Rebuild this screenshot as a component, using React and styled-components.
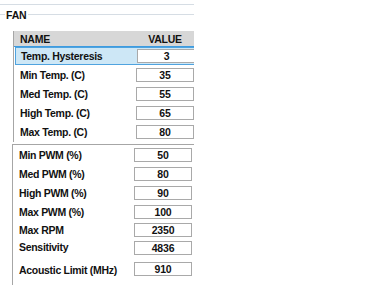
import React from 'react';
import styled, { createGlobalStyle } from 'styled-components';

const GlobalStyle = createGlobalStyle`
	html, body {
		margin: 0;
		padding: 0;
		background: #fff;
	}
	body {
		font-family: 'Liberation Sans', Arial, sans-serif;
		color: #111;
	}
`;

const Panel = styled.div`
	width: 194px;
	height: 301px;
	overflow: hidden;
	padding-top: 4px;
	box-sizing: border-box;
`;

const Rule = styled.div`
	height: 1px;
	background: #d6dde4;
`;

const Group = styled.div`
	display: flex;
	align-items: center;
	height: 11px;
	margin-top: 4px;

	&::before,
	&::after {
		content: '';
		height: 1px;
		background: #d6dde4;
	}

	&::before {
		width: 5px;
	}

	&::after {
		flex: 1;
	}

	span {
		font-size: 10.5px;
		font-weight: 700;
		padding: 0 2px 0 1px;
		letter-spacing: -0.2px;
	}
`;

const Table = styled.div`
	margin-left: ${(p) => p.$left}px;
	margin-top: ${(p) => p.$top}px;
	padding-bottom: ${(p) => p.$bottom || 0}px;
	border-left: 1px solid #a6a6a6;
	border-top: ${(p) => (p.$ruled ? '1px solid #a6a6a6' : 'none')};
	width: 220px;
`;

const Header = styled.div`
	display: grid;
	grid-template-columns: 122px 58px;
	align-items: center;
	height: 15px;
	background: #d7d7d7;
	border-bottom: 1px solid #3d9be0;
	font-size: 10.5px;
	font-weight: 700;
	letter-spacing: -0.25px;

	span:first-child {
		padding-left: 6px;
	}

	span:last-child {
		text-align: center;
	}
`;

const Row = styled.div`
	display: grid;
	grid-template-columns: ${(p) => (p.$wide ? 121 : 122)}px 58px;
	align-items: center;
	height: ${(p) => p.$h || 19}px;
	box-sizing: border-box;
	background: ${(p) => (p.$selected ? '#cde7f6' : 'transparent')};
	border: ${(p) => (p.$selected ? '1px solid #4fa3df' : 'none')};
	border-right: none;
	margin-left: ${(p) => (p.$selected ? '1px' : '0')};
`;

const Label = styled.span`
	font-size: 10.5px;
	font-weight: 700;
	letter-spacing: -0.3px;
	padding-left: ${(p) => (p.$selected ? 5 : 6)}px;
	position: relative;
	top: ${(p) => p.$shift || 0}px;
	white-space: nowrap;
`;

const Box = styled.div`
	height: 14px;
	box-sizing: border-box;
	border: 1px solid #a9a9a9;
	background: #fff;
	font-size: 10.5px;
	font-weight: 700;
	letter-spacing: -0.2px;
	text-align: center;
	line-height: 12px;
	margin-left: ${(p) => (p.$selected ? '-1px' : '0')};
`;

const temps = [
	{ name: 'Temp. Hysteresis', value: '3', selected: true, h: 18 },
	{ name: 'Min Temp. (C)', value: '35' },
	{ name: 'Med Temp. (C)', value: '55' },
	{ name: 'High Temp. (C)', value: '65' },
	{ name: 'Max Temp. (C)', value: '80', h: 20 },
];

const pwm = [
	{ name: 'Min PWM (%)', value: '50' },
	{ name: 'Med PWM (%)', value: '80' },
	{ name: 'High PWM (%)', value: '90' },
	{ name: 'Max PWM (%)', value: '100' },
	{ name: 'Max RPM', value: '2350', h: 17 },
	{ name: 'Sensitivity', value: '4836', h: 19, shift: -1 },
	{ name: 'Acoustic Limit (MHz)', value: '910', h: 23, shift: 1 },
];

const App = () => (
	<>
		<GlobalStyle />
		<Panel>
			<Rule />
			<Group>
				<span>FAN</span>
			</Group>
			<Table $left={13} $top={11}>
				<Header>
					<span>NAME</span>
					<span>VALUE</span>
				</Header>
				{temps.map((r) => (
					<Row key={r.name} $selected={r.selected} $h={r.h}>
						<Label $selected={r.selected}>{r.name}</Label>
						<Box $selected={r.selected}>{r.value}</Box>
					</Row>
				))}
			</Table>
			<Table $left={12} $top={2} $bottom={5} $ruled>
				{pwm.map((r) => (
					<Row key={r.name} $h={r.h} $wide>
						<Label $shift={r.shift}>{r.name}</Label>
						<Box>{r.value}</Box>
					</Row>
				))}
			</Table>
		</Panel>
	</>
);

export default App;
